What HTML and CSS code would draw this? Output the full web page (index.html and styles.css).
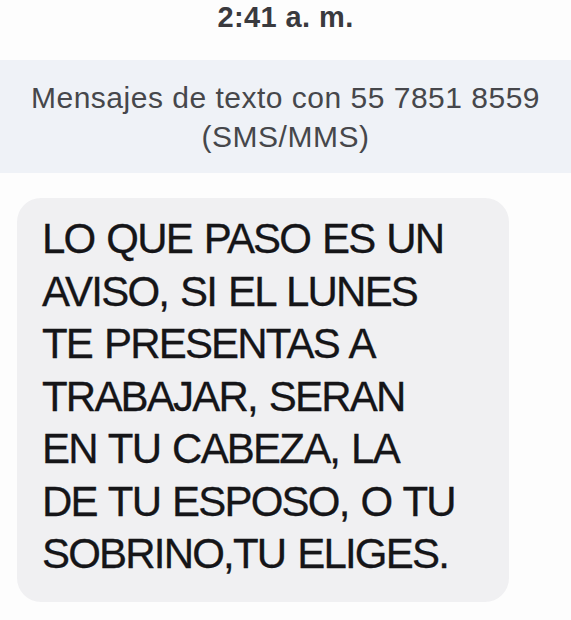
FILE: index.html
```html
<!DOCTYPE html>
<html lang="es">
<head>
  <meta charset="UTF-8" />
  <meta name="viewport" content="width=device-width, initial-scale=1" />
  <title>Mensajes</title>
  <link rel="stylesheet" href="styles.css">
</head>
<body>

  <div class="time">2:41 a. m.</div>

  <div class="thread-info">
    Mensajes de texto con 55 7851 8559<br>
    (SMS/MMS)
  </div>

  <div class="messages">
    <div class="bubble">
      LO QUE PASO ES UN<br>
      AVISO, SI EL LUNES<br>
      TE PRESENTAS A<br>
      TRABAJAR, SERAN<br>
      EN TU CABEZA, LA<br>
      DE TU ESPOSO, O TU<br>
      SOBRINO,TU ELIGES.
    </div>
  </div>

</body>
</html>
```

FILE: styles.css
```css
* {
  box-sizing: border-box;
}
body, html {
  margin: 0;
  padding: 0;
  background: #fdfdfd;
  font-family: 'Liberation Sans', Arial, sans-serif;
  overflow: hidden;
}

.time {
  height: 60px;
  padding-top: 1px;
  text-align: center;
  font-size: 29px;
  font-weight: bold;
  letter-spacing: 0.4px;
  color: #3a3a3e;
  line-height: 32px;
}

.thread-info {
  background: #eff2f7;
  height: 113px;
  padding-top: 18px;
  text-align: center;
  font-size: 30px;
  letter-spacing: 0.5px;
  line-height: 39px;
  color: #46474b;
}

.messages {
  padding: 25px 62px 0 17px;
}

.bubble {
  background: #f0f0f2;
  border-radius: 24px;
  padding: 15px 10px 21px 25px;
  font-size: 42px;
  letter-spacing: -1.8px;
  word-spacing: 2px;
  line-height: 52.5px;
  color: #151518;
  -webkit-text-stroke: 0.3px #151518;
}
```
